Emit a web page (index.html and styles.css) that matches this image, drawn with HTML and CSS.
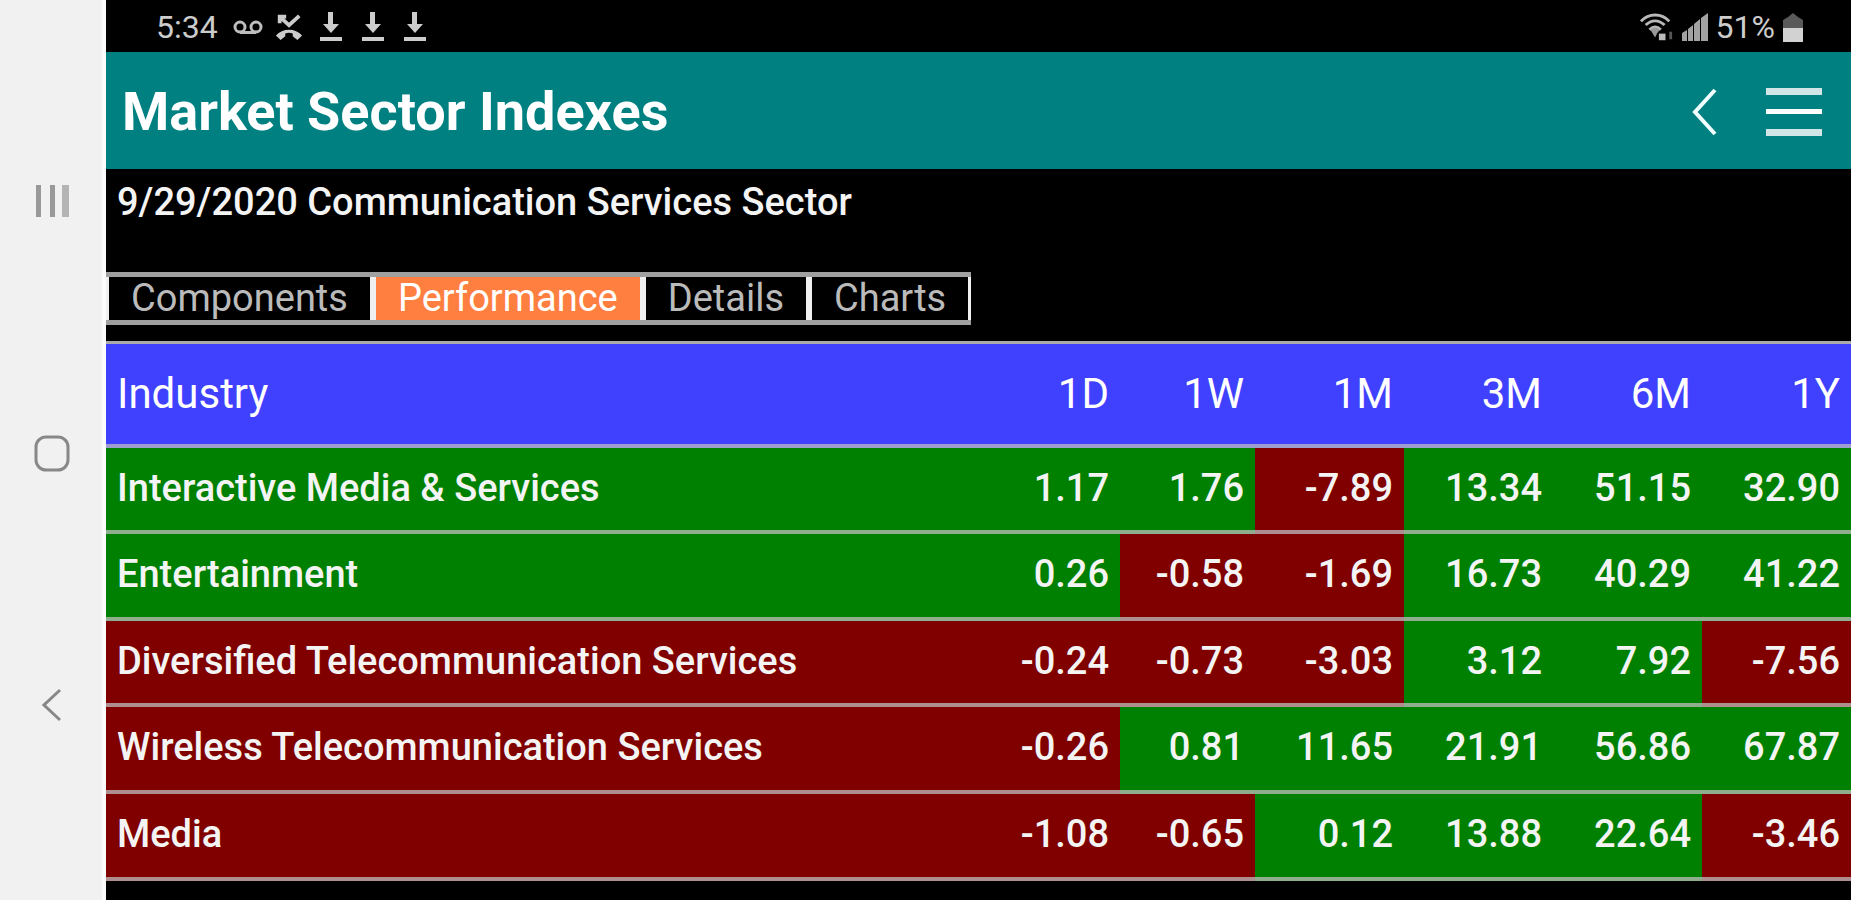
FILE: index.html
```html
<!DOCTYPE html>
<html lang="en">
<head>
<meta charset="utf-8">
<meta name="viewport" content="width=device-width, initial-scale=1">
<title>Market Sector Indexes</title>
<link rel="stylesheet" href="styles.css">
</head>
<body>
<nav class="rail" aria-label="System">
  <button class="rail-button" aria-label="Recent apps">
    <svg width="36" height="32" viewBox="0 0 36 32"><path fill="#999" d="M2 0h5v32H2zM16 0h5v32h-5z"/><path fill="#b4b4b4" d="M28 0h7v32h-7z"/></svg>
  </button>
  <button class="rail-button" aria-label="Home">
    <svg width="36" height="37" viewBox="0 0 36 37"><rect x="2" y="2" width="32" height="33" rx="10" fill="none" stroke="#888" stroke-width="3"/></svg>
  </button>
  <button class="rail-button" aria-label="Back">
    <svg width="20" height="34" viewBox="0 0 20 34"><path d="M18 2 2 17l16 15" fill="none" stroke="#888" stroke-width="3"/></svg>
  </button>
</nav>
<div class="screen">
  <div class="status">
    <div class="status-left">
      <span class="clock">5:34</span>
      <svg class="voicemail" width="30" height="14" viewBox="0 0 30 14"><g fill="none" stroke="#bdbdbd" stroke-width="3"><circle cx="7" cy="7" r="5"/><circle cx="23" cy="7" r="5"/><path d="M7 12.500h16"/></g></svg>
      <svg class="missed" width="28" height="28" viewBox="0 0 30 28"><path d="M5 10V3h7M5 3l10 9L26 2" fill="none" stroke="#ccc" stroke-width="4"/><path d="M1 23c7-8 21-8 28 0l-5 5-5-4v-3c-3-1-5-1-8 0v3l-5 4z" fill="#ccc"/></svg>
      <span class="downloads">
        <svg width="22" height="30" viewBox="0 0 22 30"><path d="M8 0h5v12h6l-8 9-8-9h5zM0 25h22v4H0z" fill="#ccc"/></svg>
        <svg width="22" height="30" viewBox="0 0 22 30"><path d="M8 0h5v12h6l-8 9-8-9h5zM0 25h22v4H0z" fill="#ccc"/></svg>
        <svg width="22" height="30" viewBox="0 0 22 30"><path d="M8 0h5v12h6l-8 9-8-9h5zM0 25h22v4H0z" fill="#ccc"/></svg>
      </span>
    </div>
    <div class="status-right">
      <svg width="34" height="30" viewBox="0 0 36 30"><g fill="none" stroke="#b8b8b8" stroke-width="3"><path d="M1 9c8-9 22-9 30 0M6 13c6-6 14-6 20 0M10 18c4-4 8-4 12 0"/></g><path d="M11 18c3-3 7-3 10 0l-3 4-2 4z" fill="#999"/><path d="M20 22h7v7h-7z" fill="#bbb"/><path d="M31 20h3v8h-3z" fill="#555"/></svg>
      <svg class="signal" width="26" height="28" viewBox="0 0 26 28"><path d="M0 28v-8l5-3v11zM6 28V16l5-4v16zM12 28V11l6-5v22zM19 28V5l7-5v28z" fill="#a2a2a2"/></svg>
      <span class="charge">51%</span>
      <svg width="20" height="29" viewBox="0 0 20 29"><path d="M10 0l5 4 5 3v22H0V7l5-3z" fill="#5a5a5a"/><path d="M0 15h20v14H0z" fill="#d2d2d2"/></svg>
    </div>
  </div>
  <header class="app-bar">
    <h1 class="title">Market Sector Indexes</h1>
    <div class="actions">
      <button class="icon-button" aria-label="Back">
        <svg width="28" height="48" viewBox="0 0 28 48"><path d="M25 2 5 24l20 22" fill="none" stroke="#f2ffff" stroke-width="4"/></svg>
      </button>
      <button class="icon-button" aria-label="Menu">
        <svg width="56" height="48" viewBox="0 0 56 48"><path d="M0 0h56v7H0zM0 41h56v7H0z" fill="#d0e6e6"/><path d="M0 21h56v5H0z" fill="#fff"/></svg>
      </button>
    </div>
  </header>
  <main>
    <h2 class="subtitle">9/29/2020 Communication Services Sector</h2>
    <div class="tabs" role="tablist">
      <button class="tab" role="tab">Components</button>
      <button class="tab active" role="tab" aria-selected="true">Performance</button>
      <button class="tab" role="tab">Details</button>
      <button class="tab" role="tab">Charts</button>
    </div>
    <table class="sectors">
      <colgroup><col><col class="day"><col class="week"><col class="period"><col class="period"><col class="period"><col class="period"></colgroup>
      <thead>
        <tr><th>Industry</th><th>1D</th><th>1W</th><th>1M</th><th>3M</th><th>6M</th><th>1Y</th></tr>
      </thead>
      <tbody>
        <tr><td class="up">Interactive Media &amp; Services</td><td class="up">1.17</td><td class="up">1.76</td><td class="down">-7.89</td><td class="up">13.34</td><td class="up">51.15</td><td class="up">32.90</td></tr>
        <tr><td class="up">Entertainment</td><td class="up">0.26</td><td class="down">-0.58</td><td class="down">-1.69</td><td class="up">16.73</td><td class="up">40.29</td><td class="up">41.22</td></tr>
        <tr><td class="down">Diversified Telecommunication Services</td><td class="down">-0.24</td><td class="down">-0.73</td><td class="down">-3.03</td><td class="up">3.12</td><td class="up">7.92</td><td class="down">-7.56</td></tr>
        <tr><td class="down">Wireless Telecommunication Services</td><td class="down">-0.26</td><td class="up">0.81</td><td class="up">11.65</td><td class="up">21.91</td><td class="up">56.86</td><td class="up">67.87</td></tr>
        <tr><td class="down">Media</td><td class="down">-1.08</td><td class="down">-0.65</td><td class="up">0.12</td><td class="up">13.88</td><td class="up">22.64</td><td class="down">-3.46</td></tr>
      </tbody>
    </table>
  </main>
</div>
</body>
</html>
```
FILE: styles.css
```css
* { box-sizing: border-box; }

body {
  margin: 0;
  min-height: 100vh;
  display: flex;
  background: #000;
  color: #f4f4f4;
  font-family: Roboto, "Liberation Sans", sans-serif;
}

svg { display: block; }

button {
  margin: 0;
  padding: 0;
  border: 0;
  background: none;
  color: inherit;
  font: inherit;
}

/* System navigation rail */
.rail {
  flex: none;
  width: 106px;
  padding: 6px 0 0 2px;
  display: flex;
  flex-direction: column;
  justify-content: center;
  background: #f1f1f1;
  border-right: 4px solid #fcfcfc;
}

.rail-button {
  height: 252px;
  display: flex;
  align-items: center;
  justify-content: center;
}

.screen { flex: 1; min-width: 0; }

/* Status bar */
.status {
  height: 52px;
  padding: 2px 48px 0 50px;
  display: flex;
  align-items: center;
  justify-content: space-between;
  color: #ccc;
  font-size: 32px;
}

.status-left,
.status-right { display: flex; align-items: center; }

.clock { margin-right: 15px; }
.voicemail { margin-right: 12px; }
.missed { margin-right: 17px; }
.downloads { display: flex; gap: 20px; }
.status-right { gap: 8px; }

/* App bar */
.app-bar {
  height: 117px;
  padding: 2px 29px 0 16px;
  display: flex;
  align-items: center;
  justify-content: space-between;
  background: teal;
}

.title { margin: 0; color: #fff; font-size: 54px; font-weight: 700; }
.actions { display: flex; gap: 48px; }
.icon-button { display: flex; }

.subtitle {
  margin: 0;
  padding: 9px 11px 0;
  height: 103px;
  font-size: 38px;
  font-weight: 500;
  line-height: 48px;
}

/* Tabs */
.tabs {
  display: flex;
  width: fit-content;
  margin-bottom: 16px;
  border: solid #a0a0a0;
  border-width: 5px 0;
}

.tab {
  height: 43px;
  padding: 0 22px 2px;
  border: solid #f0f0f0;
  border-width: 0 3px;
  background: #000;
  color: #bbb;
  font-size: 38px;
  line-height: 40px;
}

.tab.active { background: #ff7f40; color: #fff; }

/* Sector table */
.sectors {
  width: 100%;
  table-layout: fixed;
  border-collapse: separate;
  border-spacing: 0;
  border-top: 3px solid #aaa;
}

.day { width: 135px; }
.week { width: 135px; }
.period { width: 149px; }

th,
td {
  height: 86px;
  padding: 0 11px 3px;
  border-bottom: 4px solid rgba(190, 190, 190, 0.75);
  font-size: 38px;
  font-weight: 500;
  text-align: right;
  white-space: nowrap;
}

th:first-child,
td:first-child { text-align: left; }

th {
  height: 104px;
  padding-bottom: 2px;
  background: #4040ff;
  color: #fff;
  font-size: 42px;
  font-weight: 400;
}

tr:nth-child(even) td,
tr:last-child td { height: 87px; }

.up { background: green; }
.down { background: maroon; }
```
